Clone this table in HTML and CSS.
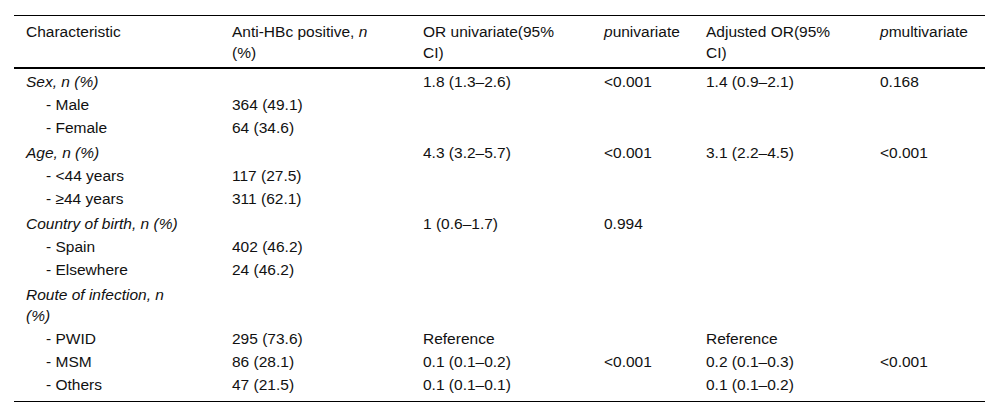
FILE: index.html
```html
<!DOCTYPE html>
<html>
<head>
<meta charset="utf-8">
<link rel="stylesheet" href="styles.css">
</head>
<body>
<div class="wrap">
<table class="tbl">
  <thead>
    <tr>
      <th class="c1">Characteristic</th>
      <th class="c2">Anti-HBc positive, <i>n</i> (%)</th>
      <th class="c3">OR univariate(95% CI)</th>
      <th class="c4"><i>p</i>univariate</th>
      <th class="c5">Adjusted OR(95% CI)</th>
      <th class="c6"><i>p</i>multivariate</th>
    </tr>
  </thead>
  <tbody>
    <tr class="grp"><td><i>Sex, n (%)</i></td><td></td><td>1.8 (1.3–2.6)</td><td>&lt;0.001</td><td>1.4 (0.9–2.1)</td><td>0.168</td></tr>
    <tr><td class="sub">- Male</td><td>364 (49.1)</td><td></td><td></td><td></td><td></td></tr>
    <tr><td class="sub">- Female</td><td>64 (34.6)</td><td></td><td></td><td></td><td></td></tr>
    <tr class="grp"><td><i>Age, n (%)</i></td><td></td><td>4.3 (3.2–5.7)</td><td>&lt;0.001</td><td>3.1 (2.2–4.5)</td><td>&lt;0.001</td></tr>
    <tr><td class="sub">- &lt;44 years</td><td>117 (27.5)</td><td></td><td></td><td></td><td></td></tr>
    <tr><td class="sub">- ≥44 years</td><td>311 (62.1)</td><td></td><td></td><td></td><td></td></tr>
    <tr class="grp"><td><i>Country of birth, n (%)</i></td><td></td><td>1 (0.6–1.7)</td><td>0.994</td><td></td><td></td></tr>
    <tr><td class="sub">- Spain</td><td>402 (46.2)</td><td></td><td></td><td></td><td></td></tr>
    <tr><td class="sub">- Elsewhere</td><td>24 (46.2)</td><td></td><td></td><td></td><td></td></tr>
    <tr class="grp"><td><i>Route of infection, n (%)</i></td><td></td><td></td><td></td><td></td><td></td></tr>
    <tr><td class="sub">- PWID</td><td>295 (73.6)</td><td>Reference</td><td></td><td>Reference</td><td></td></tr>
    <tr><td class="sub">- MSM</td><td>86 (28.1)</td><td>0.1 (0.1–0.2)</td><td>&lt;0.001</td><td>0.2 (0.1–0.3)</td><td>&lt;0.001</td></tr>
    <tr class="last"><td class="sub">- Others</td><td>47 (21.5)</td><td>0.1 (0.1–0.1)</td><td></td><td>0.1 (0.1–0.2)</td><td></td></tr>
  </tbody>
</table>
</div>
</body>
</html>
```

FILE: styles.css
```css
html, body {
  margin: 0;
  padding: 0;
  background: #fff;
}
body {
  font-family: "Liberation Sans", Arial, Helvetica, sans-serif;
  font-size: 15.5px;
  color: #111;
}
.wrap {
  padding: 15px 15px 0 14px;
}
.tbl {
  border-collapse: collapse;
  table-layout: fixed;
  width: 971px;
}
.tbl th {
  font-weight: normal;
  text-align: left;
  vertical-align: top;
  line-height: 21px;
  padding: 5px 0 4px 12px;
  border-top: 1px solid #000;
  border-bottom: 2px solid #000;
}
.tbl td {
  text-align: left;
  vertical-align: top;
  line-height: 21px;
  padding: 1px 0 1px 12px;
  white-space: nowrap;
}
.tbl tr.grp td {
  padding-top: 3px;
}
.tbl tbody tr:first-child td {
  padding-top: 2px;
}
.tbl tr.grp td:first-child {
  white-space: normal;
  padding-right: 36px;
}
.tbl tr.last td {
  padding-bottom: 6px;
  border-bottom: 1px solid #000;
}
.tbl td.sub {
  padding-left: 32px;
}
.tbl .c1 { width: 158px; padding-right: 36px; }
.tbl .c2 { width: 148px; padding-right: 31px; }
.tbl .c3 { width: 142px; padding-right: 27px; }
.tbl .c4 { width: 90px; }
.tbl .c5 { width: 136px; padding-right: 26px; }
.tbl .c6 { width: 105px; }
```
